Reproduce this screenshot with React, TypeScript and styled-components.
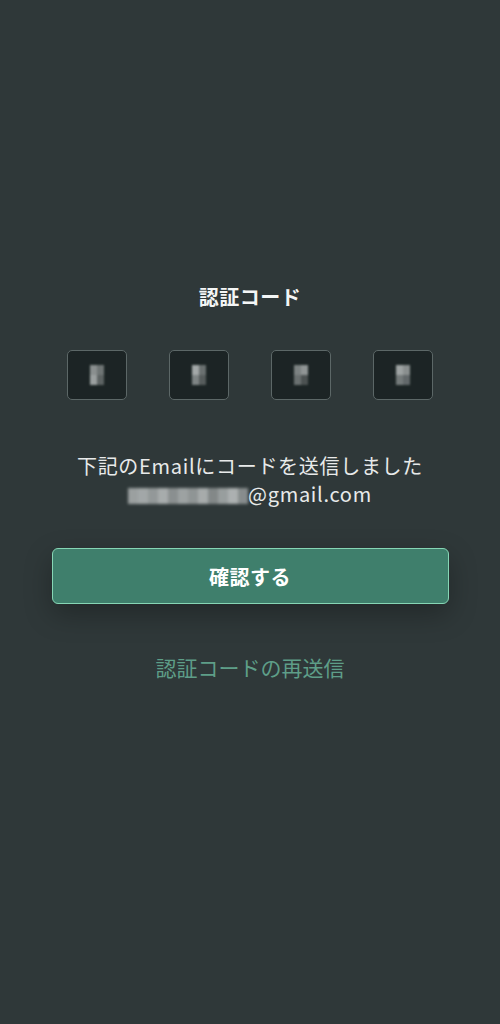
import React from 'react';
import styled, { createGlobalStyle } from 'styled-components';

const GlobalStyle = createGlobalStyle`
  html, body {
    margin: 0;
    padding: 0;
    background: #2f3839;
  }
  body {
    font-family: "Noto Sans CJK JP", "Noto Sans", sans-serif;
  }
`;

const digits = [
  ['#8a8f8f', '#6f7575', '#9a9f9f', '#5d6363'],
  ['#a3a8a8', '#6a7070', '#7e8484', '#565c5c'],
  ['#7c8282', '#909595', '#6a7070', '#4c5252'],
  ['#9ea3a3', '#8a8f8f', '#747a7a', '#62686a'],
];

const emailBlocks = [
  '#bfc3c3', '#c9cdcd', '#b5b9b9', '#d0d3d3', '#a9adad', '#c2c6c6',
  '#b0b4b4', '#cfd2d2', '#9fa3a3', '#bcc0c0', '#d6d9d9', '#a5a9a9',
];

export default function App() {
  return (
    <>
      <GlobalStyle />
      <Page>
        <Title>認証コード</Title>
        <CodeRow>
          {digits.map((d, i) => (
            <CodeBox key={i}>
              <Pixel>
                {d.map((c, j) => (
                  <Cell key={j} color={c} />
                ))}
              </Pixel>
            </CodeBox>
          ))}
        </CodeRow>
        <Message>
          下記のEmailにコードを送信しました
          <br />
          <Blur>
            {emailBlocks.map((c, i) => (
              <BlurCell key={i} color={c} />
            ))}
          </Blur>
          @gmail.com
        </Message>
        <ConfirmButton>確認する</ConfirmButton>
        <Resend>認証コードの再送信</Resend>
      </Page>
    </>
  );
}

const Page = styled.div`
  height: 1024px;
  box-sizing: border-box;
  padding-top: 284px;
  display: flex;
  flex-direction: column;
  align-items: center;
  color: #ffffff;
`;

const Title = styled.h1`
  margin: 0;
  font-size: 20px;
  line-height: 26px;
  font-weight: 700;
  color: #f4f6f6;
  letter-spacing: 0.5px;
`;

const CodeRow = styled.div`
  margin-top: 40px;
  display: flex;
  gap: 42px;
`;

const CodeBox = styled.div`
  width: 60px;
  height: 50px;
  box-sizing: border-box;
  border: 1.5px solid #5c6767;
  border-radius: 5px;
  background: #1c2425;
  display: flex;
  align-items: center;
  justify-content: center;
`;

const Pixel = styled.div`
  width: 14px;
  height: 20px;
  display: grid;
  grid-template-columns: 1fr 1fr;
  grid-template-rows: 1fr 1fr;
  filter: blur(0.8px);
`;

const Cell = styled.div<{ color: string }>`
  background: ${({ color }) => color};
`;

const Message = styled.p`
  margin: 52px 0 0;
  font-size: 20px;
  line-height: 28px;
  letter-spacing: 0.7px;
  color: #e8eaea;
  text-align: center;
`;

const Blur = styled.span`
  display: inline-flex;
  vertical-align: -2px;
  height: 16px;
  width: 120px;
  opacity: 0.75;
  filter: blur(1.5px);
`;

const BlurCell = styled.span<{ color: string }>`
  flex: 1;
  background: ${({ color }) => color};
`;

const ConfirmButton = styled.button`
  margin-top: 40px;
  width: 397px;
  height: 56px;
  box-sizing: border-box;
  border: 1.5px solid #86d6b5;
  border-radius: 6px;
  background: #3f7f6c;
  color: #ffffff;
  font-family: "Noto Sans CJK JP", "Noto Sans", sans-serif;
  font-size: 20px;
  font-weight: 700;
  letter-spacing: 0.5px;
  box-shadow: 0 10px 28px rgba(0, 0, 0, 0.28);
`;

const Resend = styled.a`
  margin-top: 49px;
  font-size: 21px;
  line-height: 28px;
  color: #5e9e88;
  cursor: pointer;
`;
